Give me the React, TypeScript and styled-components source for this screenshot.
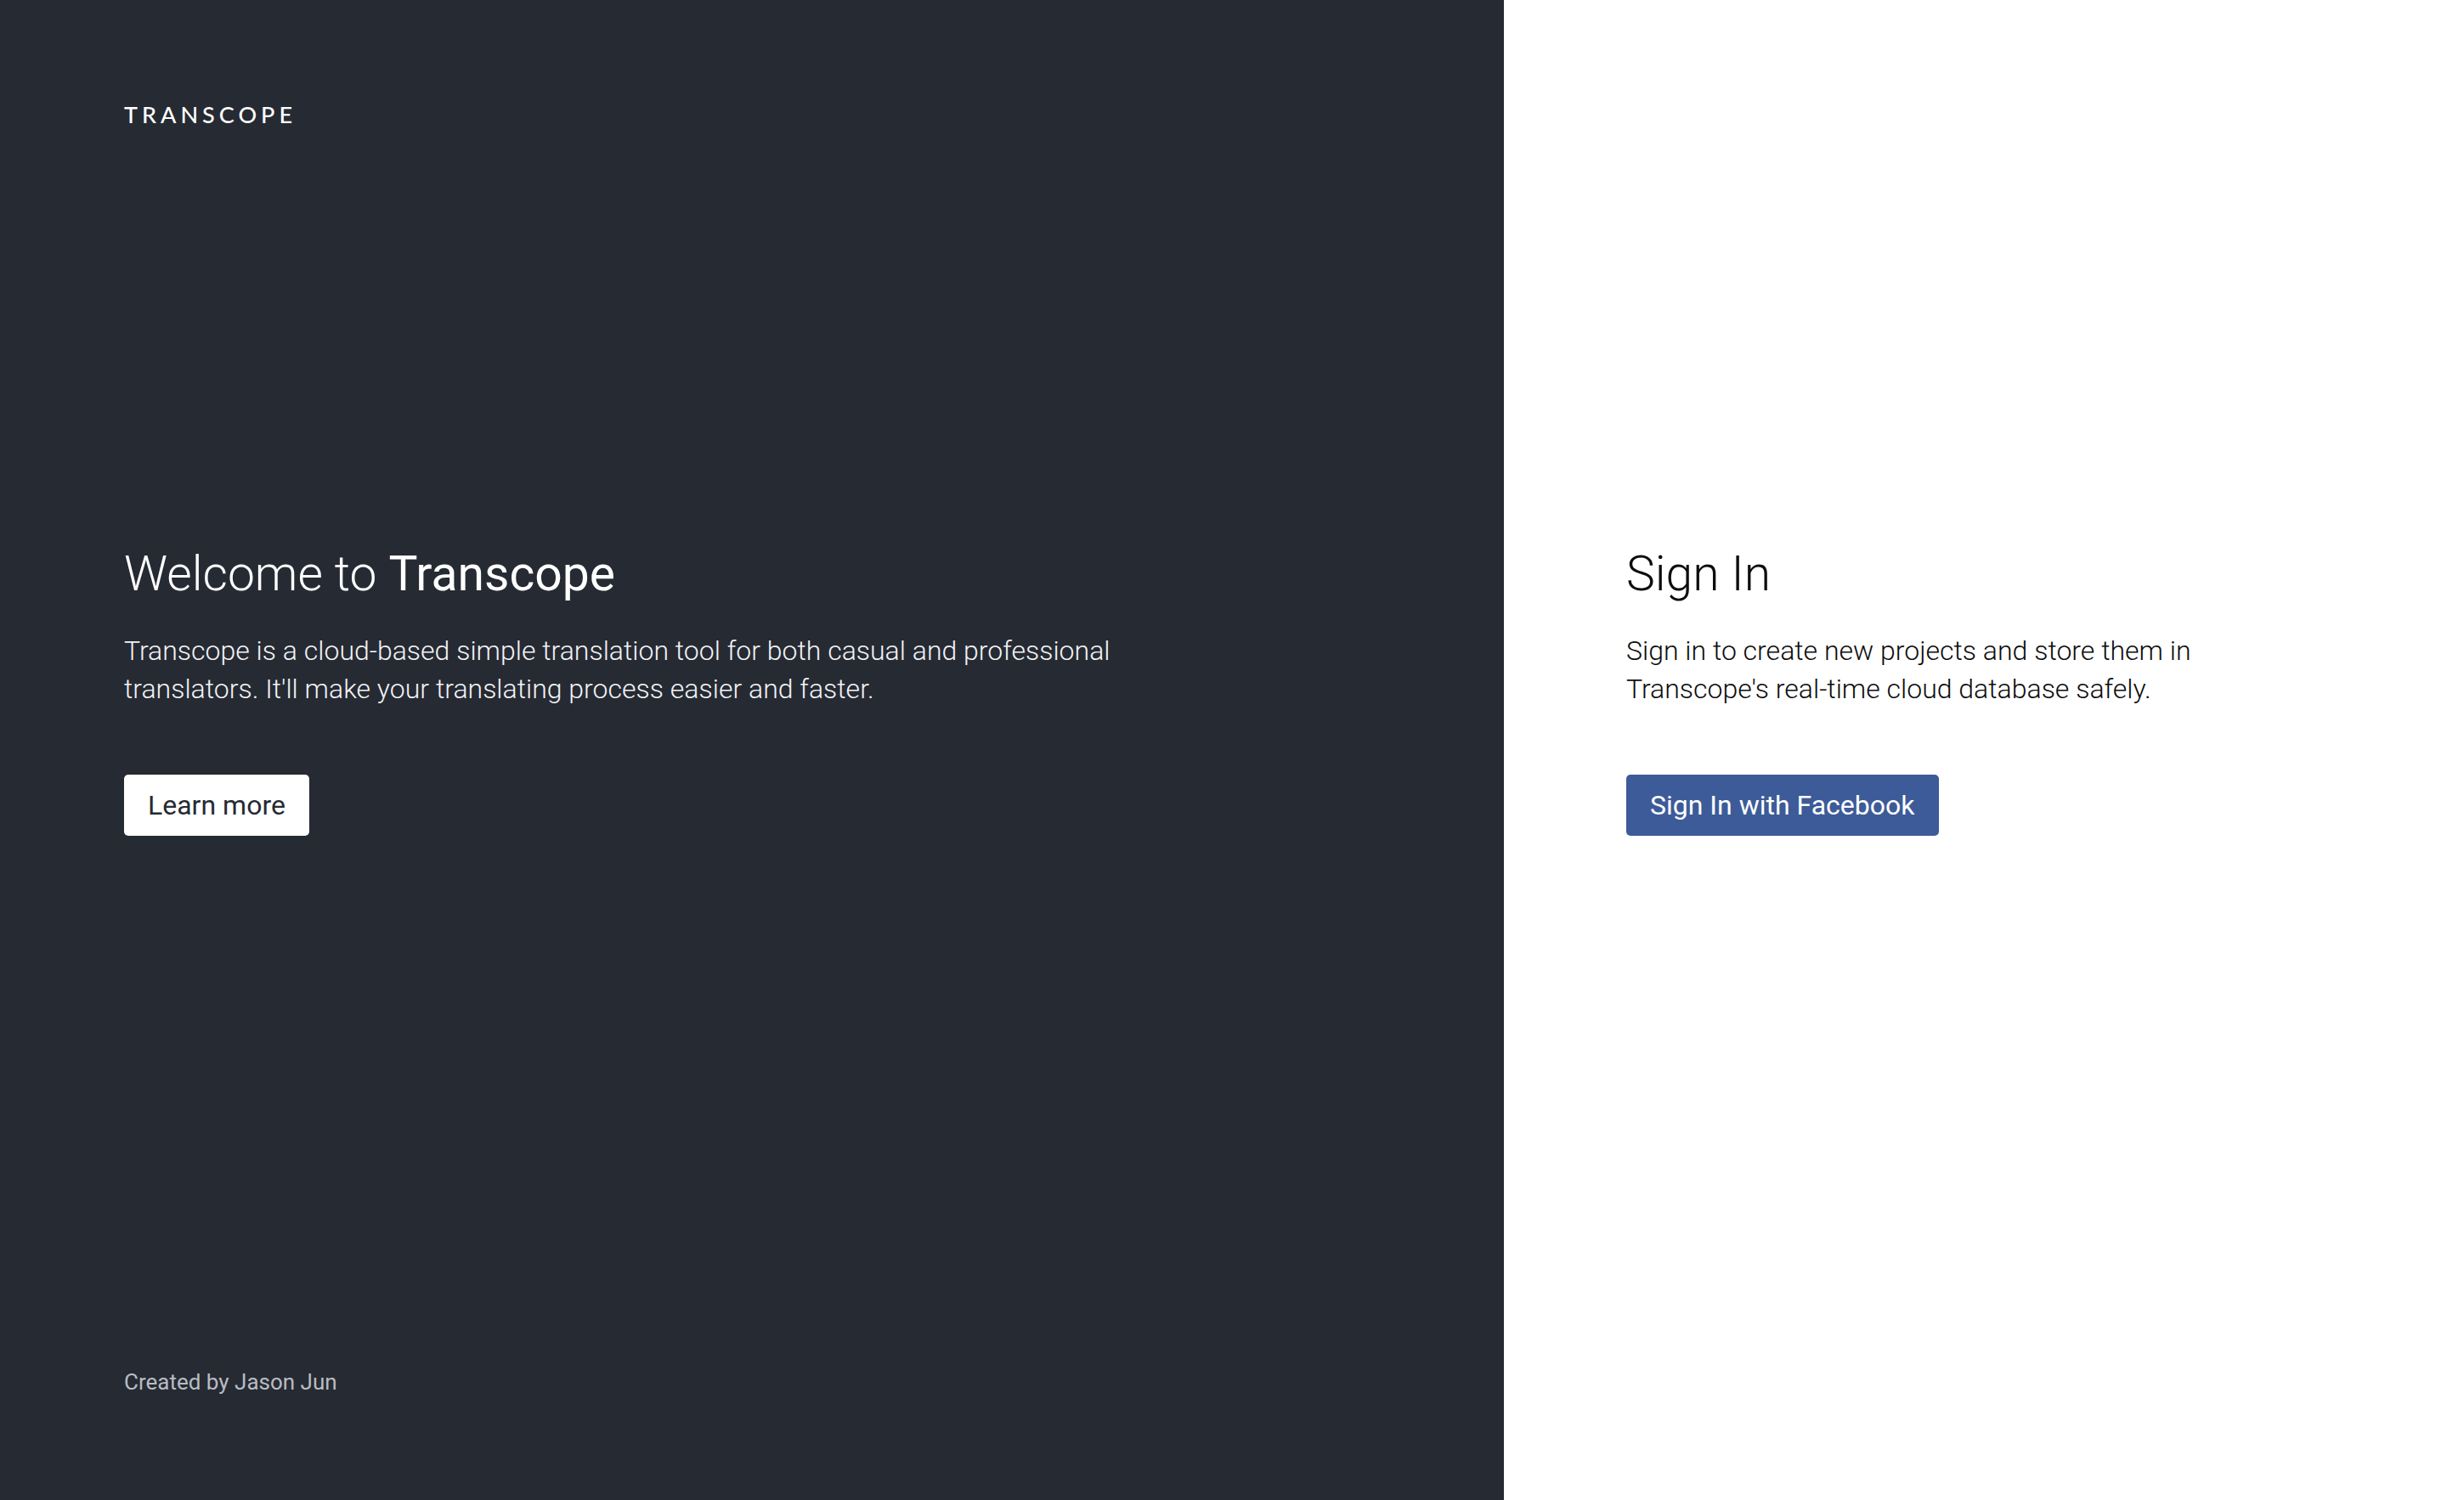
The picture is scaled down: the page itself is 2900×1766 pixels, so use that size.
import styled, { createGlobalStyle } from 'styled-components';

const GlobalStyle = createGlobalStyle`
  html, body {
    margin: 0;
    padding: 0;
    background: #ffffff;
  }

  body {
    font-family: Roboto, "Liberation Sans", sans-serif;
    -webkit-font-smoothing: antialiased;
  }
`;

export default function App() {
  return (
    <>
      <GlobalStyle />
      <Page>
        <IntroPanel>
          <Logo>TRANSCOPE</Logo>

          <Content>
            <Heading>
              Welcome to <strong>Transcope</strong>
            </Heading>
            <Description $maxWidth={1260}>
              Transcope is a cloud-based simple translation tool for both casual and professional
              translators. It'll make your translating process easier and faster.
            </Description>
            <Button $variant="light">Learn more</Button>
          </Content>

          <Footer>Created by Jason Jun</Footer>
        </IntroPanel>

        <SignInPanel>
          <Content>
            <Heading $dark>Sign In</Heading>
            <Description $dark $maxWidth={760}>
              Sign in to create new projects and store them in Transcope's real-time cloud
              database safely.
            </Description>
            <Button $variant="facebook">Sign In with Facebook</Button>
          </Content>
        </SignInPanel>
      </Page>
    </>
  );
}

const Page = styled.div`
  width: 100%;
  height: 1766px;

  display: grid;
  grid-template-columns: 1770px 1fr;
`;

const IntroPanel = styled.section`
  box-sizing: border-box;
  height: 100%;
  padding: 119px 146px 124px;

  display: flex;
  flex-direction: column;

  background: #262a33;
  color: #ffffff;
`;

const SignInPanel = styled.section`
  box-sizing: border-box;
  height: 100%;
  padding: 641px 144px 0;

  background: #ffffff;
  color: #111111;
`;

const Logo = styled.div`
  font-family: Lato, "Open Sans", sans-serif;
  font-size: 27px;
  font-weight: 500;
  line-height: 31px;
  letter-spacing: 5px;
  margin-bottom: 491px;
`;

const Content = styled.div`
  display: flex;
  flex-direction: column;
  align-items: flex-start;
`;

const Heading = styled.h1<{ $dark?: boolean }>`
  margin: 0 0 33px;

  font-size: 57px;
  font-weight: 300;
  line-height: 70px;
  color: ${({ $dark }) => ($dark ? '#0d0d0d' : '#ffffff')};

  strong {
    font-weight: 400;
  }
`;

const Description = styled.p<{ $dark?: boolean; $maxWidth: number }>`
  margin: 0 0 78px;
  max-width: ${({ $maxWidth }) => $maxWidth}px;

  font-size: 32px;
  font-weight: 300;
  line-height: 45px;
  color: ${({ $dark }) => ($dark ? '#0d0d0d' : '#f2f3f5')};
`;

const Button = styled.button<{ $variant: 'light' | 'facebook' }>`
  height: 72px;
  padding: 0 28px;

  border: none;
  border-radius: 5px;
  background: ${({ $variant }) => ($variant === 'facebook' ? '#3d5b98' : '#ffffff')};
  color: ${({ $variant }) => ($variant === 'facebook' ? '#ffffff' : '#262a33')};

  font-family: Roboto, "Liberation Sans", sans-serif;
  font-size: 32px;
  font-weight: 400;
  line-height: 72px;
  cursor: pointer;
`;

const Footer = styled.div`
  margin-top: auto;

  font-size: 26px;
  font-weight: 400;
  line-height: normal;
  color: #b9bcc2;
`;
